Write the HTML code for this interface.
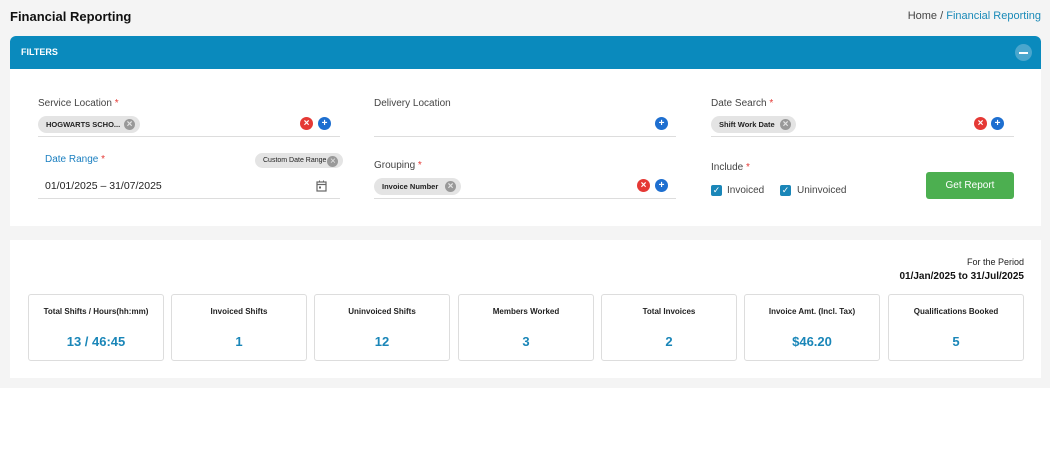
<!DOCTYPE html>
<html><head><style>
*{box-sizing:border-box;margin:0;padding:0}
body{width:1050px;height:450px;background:#fff;font-family:"Liberation Sans",sans-serif;color:#333;position:relative;overflow:hidden}
.bg{position:absolute;left:0;top:0;width:1050px;height:388px;background:#f4f4f4}
.abs{position:absolute;white-space:nowrap}
.title{left:10px;top:9px;font-size:13px;font-weight:bold;color:#111}
.bc{right:9px;top:10px;font-size:11px;color:#444}
.bc span{color:#1a8ab8}
.p1{left:10px;top:36px;width:1031px;height:190px;background:#fff;border-radius:6px 6px 0 0}
.hd{left:10px;top:36px;width:1031px;height:33px;background:#0a8abd;border-radius:6px 6px 0 0;color:#fff;font-size:9px;font-weight:bold;padding:11px 11px}
.min{right:18px;top:44px;width:17px;height:17px;border-radius:50%;background:#4aa6cd}
.min:after{content:"";position:absolute;left:4px;top:7.5px;width:9px;height:2px;background:#fff}
.lbl{font-size:10px;color:#444}
.req{color:#e53935}
.line{height:1px;background:#ddd}
.chip{background:#e4e4e4;border-radius:10px;font-size:7.5px;font-weight:bold;color:#222;padding:0 20px 0 8px;height:17px;line-height:17px}
.chip:after{content:"×";position:absolute;right:5px;top:3px;width:11px;height:11px;border-radius:50%;background:#999;color:#e4e4e4;font-size:10px;line-height:11px;text-align:center}
.x,.pl{width:13px;height:13px;border-radius:50%;color:#fff;font-size:10px;line-height:13px;text-align:center;font-weight:bold}
.x{background:#e53935}.pl{background:#1e6fd0}
.cb{width:11px;height:11px;background:#1a86b8;border-radius:2px;color:#fff;font-size:9px;line-height:11px;text-align:center}
.btn{left:926px;top:172px;width:88px;height:27px;background:#4caf50;border-radius:3px;color:#fff;font-size:10px;text-align:center;line-height:27px}
.p2{left:10px;top:240px;width:1031px;height:138px;background:#fff}
.card{top:294px;width:136px;height:67px;border:1px solid #ddd;border-radius:3px;background:#fff;text-align:center}
.card .t{font-size:8px;font-weight:bold;color:#222;margin-top:12px}
.card .v{font-size:13px;font-weight:bold;color:#1a86b8;margin-top:18px}
</style></head><body>
<div class="bg"></div>
<div class="abs title">Financial Reporting</div>
<div class="abs bc">Home / <span>Financial Reporting</span></div>
<div class="abs p1"></div>
<div class="abs hd">FILTERS</div>
<div class="abs min"></div>

<div class="abs lbl" style="left:38px;top:98px">Service Location <span class="req">*</span></div>
<div class="abs chip" style="left:38px;top:116px;width:102px">HOGWARTS SCHO...</div>
<div class="abs x" style="left:300px;top:117px">×</div>
<div class="abs pl" style="left:318px;top:117px">+</div>
<div class="abs line" style="left:38px;top:136px;width:302px"></div>

<div class="abs lbl" style="left:45px;top:154px;color:#1a7fc0">Date Range <span class="req">*</span></div>
<div class="abs chip" style="left:255px;top:153px;font-size:7px;font-weight:normal;height:15px;line-height:15px;padding-right:17px">Custom Date Range</div>
<div class="abs" style="left:45px;top:180px;font-size:10.5px;color:#222">01/01/2025 – 31/07/2025</div>
<svg class="abs" style="left:316px;top:180px" width="11" height="12" viewBox="0 0 11 12"><rect x="1" y="2" width="9" height="9" fill="none" stroke="#666" stroke-width="1.2"/><line x1="1" y1="4.5" x2="10" y2="4.5" stroke="#666" stroke-width="1.2"/><line x1="3.5" y1="0.5" x2="3.5" y2="2.5" stroke="#666"/><line x1="7.5" y1="0.5" x2="7.5" y2="2.5" stroke="#666"/><rect x="3" y="6.5" width="2" height="2" fill="#666"/></svg>
<div class="abs line" style="left:38px;top:198px;width:302px"></div>

<div class="abs lbl" style="left:374px;top:98px">Delivery Location</div>
<div class="abs pl" style="left:655px;top:117px">+</div>
<div class="abs line" style="left:374px;top:136px;width:302px"></div>

<div class="abs lbl" style="left:374px;top:160px">Grouping <span class="req">*</span></div>
<div class="abs chip" style="left:374px;top:178px;width:87px">Invoice Number</div>
<div class="abs x" style="left:637px;top:179px">×</div>
<div class="abs pl" style="left:655px;top:179px">+</div>
<div class="abs line" style="left:374px;top:198px;width:302px"></div>

<div class="abs lbl" style="left:711px;top:98px">Date Search <span class="req">*</span></div>
<div class="abs chip" style="left:711px;top:116px;width:85px">Shift Work Date</div>
<div class="abs x" style="left:974px;top:117px">×</div>
<div class="abs pl" style="left:991px;top:117px">+</div>
<div class="abs line" style="left:711px;top:136px;width:303px"></div>

<div class="abs lbl" style="left:711px;top:162px">Include <span class="req">*</span></div>
<div class="abs cb" style="left:711px;top:185px">✓</div>
<div class="abs lbl" style="left:727px;top:185px">Invoiced</div>
<div class="abs cb" style="left:780px;top:185px">✓</div>
<div class="abs lbl" style="left:797px;top:185px">Uninvoiced</div>
<div class="abs btn">Get Report</div>

<div class="abs p2"></div>
<div class="abs" style="right:26px;top:257px;font-size:9px;color:#222">For the Period</div>
<div class="abs" style="right:26px;top:271px;font-size:10px;font-weight:bold;color:#111">01/Jan/2025 to 31/Jul/2025</div>

<div class="abs card" style="left:28px"><div class="t">Total Shifts / Hours(hh:mm)</div><div class="v">13 / 46:45</div></div>
<div class="abs card" style="left:171px"><div class="t">Invoiced Shifts</div><div class="v">1</div></div>
<div class="abs card" style="left:314px"><div class="t">Uninvoiced Shifts</div><div class="v">12</div></div>
<div class="abs card" style="left:458px"><div class="t">Members Worked</div><div class="v">3</div></div>
<div class="abs card" style="left:601px"><div class="t">Total Invoices</div><div class="v">2</div></div>
<div class="abs card" style="left:744px"><div class="t">Invoice Amt. (Incl. Tax)</div><div class="v">$46.20</div></div>
<div class="abs card" style="left:888px"><div class="t">Qualifications Booked</div><div class="v">5</div></div>
</body></html>
